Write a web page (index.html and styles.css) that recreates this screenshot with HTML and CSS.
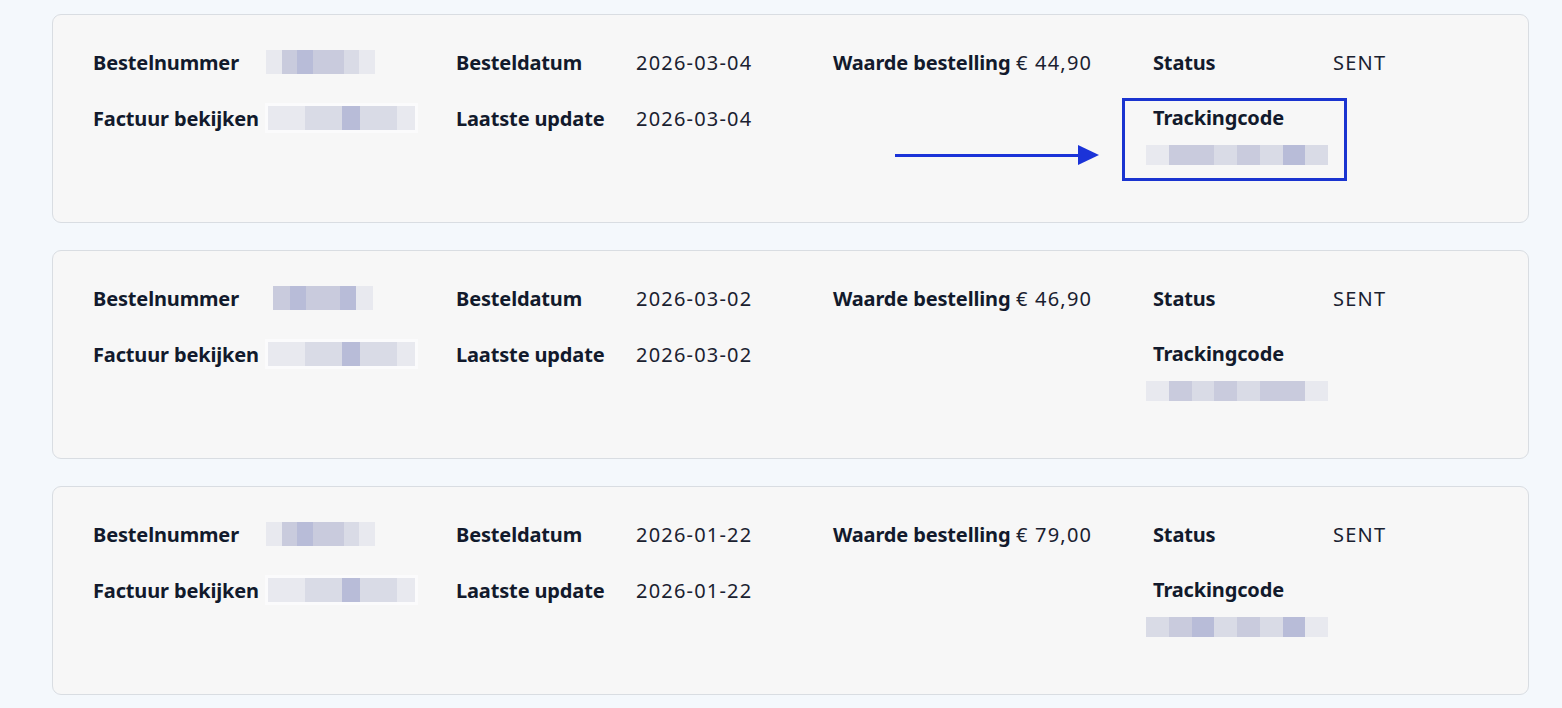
FILE: index.html
```html
<!DOCTYPE html>
<html lang="nl">
<head>
<meta charset="utf-8">
<title>Bestellingen</title>
<link rel="stylesheet" href="styles.css">
</head>
<body>
<main class="orders">
  <section class="card">
    <div class="grid">
      <span class="label">Bestelnummer</span>
      <span class="value"><span class="blur b-num"><i class="px p4"></i><i class="px p2"></i><i class="px p1"></i><i class="px p2"></i><i class="px p2"></i><i class="px p3"></i><i class="px p4"></i></span></span>
      <span class="label">Besteldatum</span>
      <span class="value">2026-03-04</span>
      <span class="label">Waarde bestelling</span>
      <span class="value">€ 44,90</span>
      <span class="label">Status</span>
      <span class="value">SENT</span>

      <span class="label">Factuur bekijken</span>
      <span class="value"><span class="blur b-inv"><i class="px p4"></i><i class="px p4"></i><i class="px p3"></i><i class="px p3"></i><i class="px p1"></i><i class="px p3"></i><i class="px p3"></i><i class="px p4"></i></span></span>
      <span class="label">Laatste update</span>
      <span class="value">2026-03-04</span>
      <span class="empty"></span>
      <span class="empty"></span>
      <div class="tracking">
        <span class="label">Trackingcode</span>
        <span class="blur b-track"><i class="px p4"></i><i class="px p2"></i><i class="px p2"></i><i class="px p3"></i><i class="px p2"></i><i class="px p3"></i><i class="px p1"></i><i class="px p3"></i></span>
      </div>
    </div>
    <div class="arrow"><span class="shaft"></span><span class="head"></span></div>
    <div class="highlight"></div>
  </section>

  <section class="card">
    <div class="grid">
      <span class="label">Bestelnummer</span>
      <span class="value"><span class="blur b-num2"><i class="px p2"></i><i class="px p1"></i><i class="px p2"></i><i class="px p2"></i><i class="px p1"></i><i class="px p4"></i></span></span>
      <span class="label">Besteldatum</span>
      <span class="value">2026-03-02</span>
      <span class="label">Waarde bestelling</span>
      <span class="value">€ 46,90</span>
      <span class="label">Status</span>
      <span class="value">SENT</span>

      <span class="label">Factuur bekijken</span>
      <span class="value"><span class="blur b-inv"><i class="px p4"></i><i class="px p4"></i><i class="px p3"></i><i class="px p3"></i><i class="px p1"></i><i class="px p3"></i><i class="px p3"></i><i class="px p4"></i></span></span>
      <span class="label">Laatste update</span>
      <span class="value">2026-03-02</span>
      <span class="empty"></span>
      <span class="empty"></span>
      <div class="tracking">
        <span class="label">Trackingcode</span>
        <span class="blur b-track"><i class="px p4"></i><i class="px p2"></i><i class="px p3"></i><i class="px p2"></i><i class="px p3"></i><i class="px p2"></i><i class="px p2"></i><i class="px p4"></i></span>
      </div>
    </div>
  </section>

  <section class="card">
    <div class="grid">
      <span class="label">Bestelnummer</span>
      <span class="value"><span class="blur b-num"><i class="px p4"></i><i class="px p2"></i><i class="px p1"></i><i class="px p2"></i><i class="px p2"></i><i class="px p3"></i><i class="px p4"></i></span></span>
      <span class="label">Besteldatum</span>
      <span class="value">2026-01-22</span>
      <span class="label">Waarde bestelling</span>
      <span class="value">€ 79,00</span>
      <span class="label">Status</span>
      <span class="value">SENT</span>

      <span class="label">Factuur bekijken</span>
      <span class="value"><span class="blur b-inv"><i class="px p4"></i><i class="px p4"></i><i class="px p3"></i><i class="px p3"></i><i class="px p1"></i><i class="px p3"></i><i class="px p3"></i><i class="px p4"></i></span></span>
      <span class="label">Laatste update</span>
      <span class="value">2026-01-22</span>
      <span class="empty"></span>
      <span class="empty"></span>
      <div class="tracking">
        <span class="label">Trackingcode</span>
        <span class="blur b-track"><i class="px p3"></i><i class="px p2"></i><i class="px p1"></i><i class="px p3"></i><i class="px p2"></i><i class="px p3"></i><i class="px p1"></i><i class="px p4"></i></span>
      </div>
    </div>
  </section>
</main>
</body>
</html>
```

FILE: styles.css
```css
* { box-sizing: border-box; }

html, body {
  margin: 0;
  padding: 0;
  background: #f4f8fc;
}

body {
  font-family: "Noto Sans", "Open Sans", Arial, sans-serif;
  color: #121a2c;
  font-size: 20px;
}

.orders {
  display: flex;
  flex-direction: column;
  gap: 27px;
  padding: 14px 33px 0 52px;
}

.card {
  position: relative;
  background: #f7f7f7;
  border: 1px solid #d9dde2;
  border-radius: 9px;
  height: 209px;
  padding: 33px 40px 0 40px;
}

.grid {
  display: grid;
  grid-template-columns: 173px 190px 180px 197px 183px 137px 180px auto;
  grid-auto-rows: 28px;
  row-gap: 28px;
  align-items: center;
}

.label {
  font-weight: 700;
  color: #121a2c;
  white-space: nowrap;
  letter-spacing: -0.15px;
}

.value {
  font-weight: 400;
  color: #1a2130;
  white-space: nowrap;
  letter-spacing: 1.2px;
}

.tracking {
  grid-column: 7 / span 2;
  display: flex;
  flex-direction: column;
  gap: 14px;
  align-self: start;
}

.blur {
  display: flex;
  height: 24px;
  background: #eceef3;
}

.blur .px {
  flex: 1;
  height: 100%;
}

.p1 { background: #b8bcd8; }
.p2 { background: #c9cbdd; }
.p3 { background: #d9dbe6; }
.p4 { background: #e8e9ef; }

.b-num { width: 109px; }
.b-num2 { width: 100px; margin-left: 7px; }
.b-inv { width: 147px; margin-left: 2px; box-shadow: 0 0 0 3px #fbfbfc; }
.b-track { width: 182px; height: 20px; margin-left: -7px; }

.arrow {
  position: absolute;
  left: 842px;
  top: 129px;
  width: 204px;
  height: 22px;
  display: flex;
  align-items: center;
}

.shaft {
  flex: 1;
  height: 3px;
  background: #1b33d8;
}

.head {
  width: 0;
  height: 0;
  border-top: 10px solid transparent;
  border-bottom: 10px solid transparent;
  border-left: 21px solid #1b33d8;
}

.highlight {
  position: absolute;
  left: 1069px;
  top: 83px;
  width: 225px;
  height: 83px;
  border: 3px solid #1a34d0;
}
```
